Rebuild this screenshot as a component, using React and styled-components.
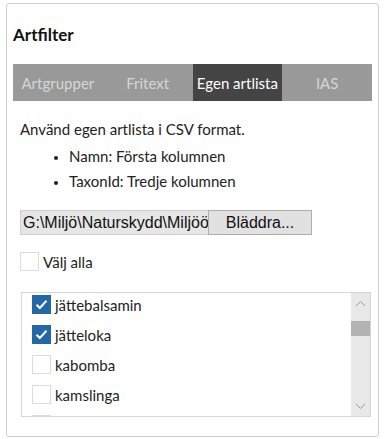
import { styled, createGlobalStyle } from 'styled-components';

const GlobalStyle = createGlobalStyle`
  html, body {
    margin: 0;
    padding: 0;
    background: #fff;
  }
  body {
    font-family: Lato, "Noto Sans", sans-serif;
    color: #222;
  }
`;

const Card = styled.div`
  box-sizing: border-box;
  margin: 3px 7px 0 6px;
  height: 434px;
  border: 1px solid #cfcfcf;
  border-radius: 3px;
  padding: 0 6px 19px 6px;
  display: flex;
  flex-direction: column;
`;

const Title = styled.h2`
  margin: 21px 0 0 0;
  font-size: 17px;
  line-height: 20px;
  font-weight: 700;
  color: #111;
  height: 41px;
`;

const TabBar = styled.div`
  display: grid;
  grid-template-columns: repeat(4, 1fr);
  height: 38px;
  background: #999;
`;

const Tab = styled.div`
  display: flex;
  align-items: center;
  justify-content: center;
  font-size: 15px;
  color: ${(p) => (p.$active ? '#fff' : '#d6d6d6')};
  background: ${(p) => (p.$active ? '#444' : 'transparent')};
`;

const Body = styled.div`
  padding: 0 7px 0 7px;
  display: flex;
  flex-direction: column;
`;

const Intro = styled.p`
  margin: 18px 0 0 0;
  font-size: 15px;
  line-height: 20px;
`;

const Bullets = styled.ul`
  margin: 5px 0 0 0;
  padding: 0 0 0 49px;
  font-size: 15px;
  line-height: 25px;
  li::marker {
    font-size: 13px;
  }
`;

const FileRow = styled.div`
  display: flex;
  margin-top: 16px;
  height: 25px;
`;

const PathField = styled.div`
  box-sizing: border-box;
  width: 188px;
  background: #e6e6e6;
  border: 1px solid #cfcfcf;
  border-right: none;
  font-family: "Liberation Sans", Arial, sans-serif;
  font-size: 16px;
  line-height: 23px;
  padding-left: 2px;
  white-space: nowrap;
  overflow: hidden;
  color: #111;
`;

const BrowseButton = styled.button`
  box-sizing: border-box;
  width: 104px;
  height: 25px;
  background: #e1e1e1;
  border: 1px solid #adadad;
  font-family: "Liberation Sans", Arial, sans-serif;
  font-size: 16px;
  color: #111;
  padding: 0;
`;

const CheckRow = styled.label`
  display: flex;
  align-items: center;
  gap: 4px;
  font-size: 15px;
  height: 19px;
`;

const Box = styled.span`
  box-sizing: border-box;
  width: 19px;
  height: 19px;
  flex: none;
  border: 1px solid ${(p) => (p.$checked ? '#2467a8' : '#dcdcdc')};
  background: ${(p) => (p.$checked ? '#2467a8' : '#fff')};
  display: flex;
  align-items: center;
  justify-content: center;
`;

const SelectAll = styled.div`
  margin-top: 17px;
`;

const ListBox = styled.div`
  box-sizing: border-box;
  margin: 21px -6px 0 1px;
  height: 125px;
  border: 1px solid #d6d6d6;
  display: flex;
  overflow: hidden;
`;

const ListItems = styled.div`
  flex: 1;
  padding: 2px 0 0 10px;
  display: flex;
  flex-direction: column;
  gap: 11px;
`;

const ScrollBar = styled.div`
  width: 19px;
  background: #e8e8e8;
  display: flex;
  flex-direction: column;
  align-items: center;
`;

const Arrow = styled.div`
  height: 20px;
  width: 19px;
  display: flex;
  align-items: center;
  justify-content: center;
`;

const Thumb = styled.div`
  width: 19px;
  height: 15px;
  margin-top: 8px;
  background: #b3b3b3;
`;

const Spacer = styled.div`
  flex: 1;
`;

function Check({ checked }) {
  return (
    <Box $checked={checked}>
      {checked && (
        <svg width="13" height="11" viewBox="0 0 13 11">
          <path d="M1.5 5.8 L4.8 9 L11.5 1.8" fill="none" stroke="#fff" strokeWidth="2" />
        </svg>
      )}
    </Box>
  );
}

const items = [
  { name: 'jättebalsamin', checked: true },
  { name: 'jätteloka', checked: true },
  { name: 'kabomba', checked: false },
  { name: 'kamslinga', checked: false },
  { name: 'kanadensisk gullris', checked: false },
];

export default function App() {
  return (
    <>
      <GlobalStyle />
      <Card>
        <Title>Artfilter</Title>
        <TabBar>
          <Tab>Artgrupper</Tab>
          <Tab>Fritext</Tab>
          <Tab $active>Egen artlista</Tab>
          <Tab>IAS</Tab>
        </TabBar>
        <Body>
          <Intro>Använd egen artlista i CSV format.</Intro>
          <Bullets>
            <li>Namn: Första kolumnen</li>
            <li>TaxonId: Tredje kolumnen</li>
          </Bullets>
          <FileRow>
            <PathField>G:\Miljö\Naturskydd\Miljöövervakning\artlista.csv</PathField>
            <BrowseButton>Bläddra...</BrowseButton>
          </FileRow>
          <SelectAll>
            <CheckRow>
              <Check checked={false} />
              Välj alla
            </CheckRow>
          </SelectAll>
          <ListBox>
            <ListItems>
              {items.map((it) => (
                <CheckRow key={it.name}>
                  <Check checked={it.checked} />
                  {it.name}
                </CheckRow>
              ))}
            </ListItems>
            <ScrollBar>
              <Arrow>
                <svg width="11" height="7" viewBox="0 0 11 7">
                  <path d="M1 6 L5.5 1.5 L10 6" fill="none" stroke="#9a9a9a" strokeWidth="1" />
                </svg>
              </Arrow>
              <Thumb />
              <Spacer />
              <Arrow>
                <svg width="11" height="7" viewBox="0 0 11 7">
                  <path d="M1 1 L5.5 5.5 L10 1" fill="none" stroke="#9a9a9a" strokeWidth="1" />
                </svg>
              </Arrow>
            </ScrollBar>
          </ListBox>
        </Body>
      </Card>
    </>
  );
}
